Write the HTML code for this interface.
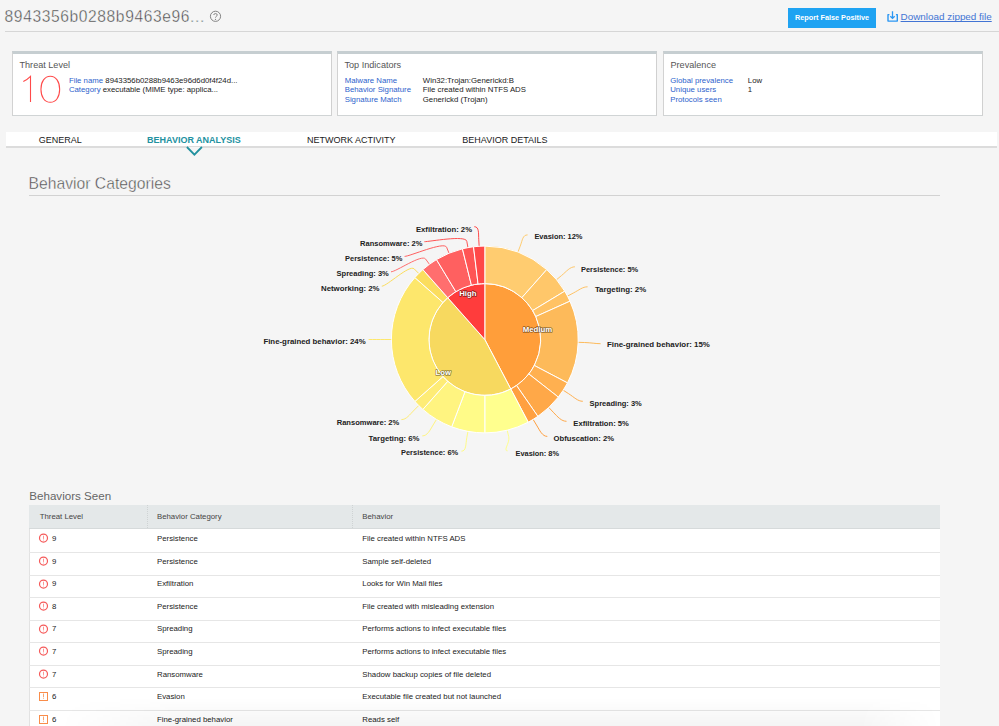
<!DOCTYPE html>
<html><head><meta charset="utf-8">
<style>
*{margin:0;padding:0;box-sizing:border-box}
html,body{width:999px;height:726px;overflow:hidden;background:#f5f5f5;font-family:"Liberation Sans",sans-serif;position:relative}
.abs{position:absolute;white-space:nowrap}
.title{left:4.6px;top:6.6px;font-size:15.6px;letter-spacing:0.6px;color:#444;-webkit-text-stroke:0.4px #f5f5f5;line-height:20px}
.hline{left:4.6px;top:31px;width:995px;height:1px;background:#d6d6d6}
.btn{left:788px;top:8px;width:88px;height:19.6px;background:#1fa3f2;color:#fff;font-weight:bold;font-size:7.3px;line-height:19.6px;text-align:center}
.dl-link{left:900.6px;top:9.6px;font-size:9.9px;color:#4274d4;text-decoration:underline;text-decoration-skip-ink:none;line-height:13px}
.card{position:absolute;top:51px;height:65px;width:320px;background:#fff;border-top:3px solid #c6ced1;border-left:1px solid #d2d2d2;border-right:1px solid #d0d0d0;border-bottom:1.5px solid #d0d4d5}
.ct{position:absolute;left:6.5px;top:5.4px;font-size:9.1px;color:#555;line-height:12px;white-space:nowrap}
.kv{position:absolute;font-size:7.8px;line-height:9.6px;white-space:nowrap;color:#222}
.lk{color:#2d62cc}
.tabs{left:6px;top:132px;width:991px;height:16px;background:#fff;border-bottom:2px solid #dcdcdc}
.tab{position:absolute;top:134.5px;font-size:9px;line-height:11px;color:#1a1a1a;white-space:nowrap}
.tab.act{color:#22919f;font-weight:bold}
.h2{left:28.6px;top:174.3px;font-size:15.7px;color:#4a4a4a;-webkit-text-stroke:0.4px #f5f5f5;line-height:20px}
.h2line{left:28.6px;top:195px;width:911.6px;height:1px;background:#d2d2d2}
.h3{left:29.3px;top:489.3px;font-size:11.6px;color:#666;line-height:14px}
.dl{font-size:7.9px;font-weight:bold;fill:#222}
.il{font-size:8.1px;font-weight:bold;fill:#fff;paint-order:stroke;stroke:#000;stroke-width:1.6px;stroke-opacity:0.45;stroke-linejoin:round}
.tbl{left:29px;top:505px;width:911px;height:230px;background:#fff;border-left:1px solid #e2e2e2}
.th{left:29px;top:505px;width:911px;height:23.5px;background:#e4e8e9;border-bottom:1.5px solid #d6dadb}
.thx{position:absolute;top:512px;font-size:7.8px;color:#444;line-height:9px;white-space:nowrap}
.sep{position:absolute;top:505px;height:23px;width:0;border-left:1px dotted #cfd3d4}
.row{position:absolute;left:29px;width:911px;height:22.56px;border-bottom:1px solid #e6e6e6}
.row span{position:absolute;top:3.8px;font-size:7.8px;line-height:9px;color:#222;white-space:nowrap}
.c1{left:23px} .c2{left:128px} .c3{left:333.3px}
.ic{position:absolute;left:9.9px;top:3.1px;width:10px;height:10px}
.ic svg{display:block}
</style></head><body>
<div class="abs title">8943356b0288b9463e96...</div>
<svg class="abs" style="left:209px;top:10px" width="13" height="13" viewBox="0 0 13 13"><circle cx="6.5" cy="6.3" r="5.1" fill="none" stroke="#777" stroke-width="0.9"/><path d="M4.7,5.0 C4.7,3.1 8.3,3.1 8.3,5.0 C8.3,6.2 6.5,6.3 6.5,7.6" fill="none" stroke="#777" stroke-width="0.9"/><circle cx="6.5" cy="9.3" r="0.6" fill="#777"/></svg>
<div class="abs hline"></div>
<div class="abs btn">Report False Positive</div>
<svg class="abs" style="left:886px;top:11px" width="13" height="12" viewBox="0 0 13 12"><path d="M3.4,3.6 H2 V10.1 H11.3 V3.6 H9.9" fill="none" stroke="#2b97f3" stroke-width="1.4" stroke-linejoin="round"/><path d="M6.5,0.3 V7.3 M4.3,5.2 L6.5,7.4 L8.7,5.2" fill="none" stroke="#2b97f3" stroke-width="1.3"/></svg>
<div class="abs dl-link">Download zipped file</div>

<div class="card" style="left:12px">
  <div class="ct">Threat Level</div>
  <svg style="position:absolute;left:-1px;top:-3px" width="60" height="60"><g transform="translate(-12,-51)" fill="none" stroke="#ff4a4a" stroke-width="1.1"><path d="M23.3,81.6 Q27.5,79.5 30.5,76.4 V102"/><path d="M50.3,76.3 C55.91,76.3 59.65,81.50 59.65,89.3 C59.65,97.10 55.91,102.3 50.3,102.3 C44.69,102.3 40.949999999999996,97.10 40.949999999999996,89.3 C40.949999999999996,81.50 44.69,76.3 50.3,76.3Z"/></g></svg>
  <div class="kv" style="left:55.9px;top:21.8px"><span class="lk">File name</span> 8943356b0288b9463e96d6d0f4f24d...</div>
  <div class="kv" style="left:55.9px;top:31.3px"><span class="lk">Category</span> executable (MIME type: applica...</div>
</div>
<div class="card" style="left:337px">
  <div class="ct">Top Indicators</div>
  <div class="kv lk" style="left:6.7px;top:21.6px">Malware Name</div>
  <div class="kv" style="left:84.8px;top:21.6px">Win32:Trojan:Generickd:B</div>
  <div class="kv lk" style="left:6.7px;top:31.1px">Behavior Signature</div>
  <div class="kv" style="left:84.8px;top:31.1px">File created within NTFS ADS</div>
  <div class="kv lk" style="left:6.7px;top:40.6px">Signature Match</div>
  <div class="kv" style="left:84.8px;top:40.6px">Generickd (Trojan)</div>
</div>
<div class="card" style="left:663px">
  <div class="ct">Prevalence</div>
  <div class="kv lk" style="left:6.2px;top:21.6px">Global prevalence</div>
  <div class="kv" style="left:83.8px;top:21.6px">Low</div>
  <div class="kv lk" style="left:6.2px;top:31.1px">Unique users</div>
  <div class="kv" style="left:83.8px;top:31.1px">1</div>
  <div class="kv lk" style="left:6.2px;top:40.6px">Protocols seen</div>
</div>

<div class="abs tabs"></div>
<div class="tab" style="left:38.8px">GENERAL</div>
<div class="tab act" style="left:147.1px">BEHAVIOR ANALYSIS</div>
<div class="tab" style="left:307px">NETWORK ACTIVITY</div>
<div class="tab" style="left:462.3px">BEHAVIOR DETAILS</div>
<svg class="abs" style="left:184px;top:145px" width="21" height="12" viewBox="0 0 21 12"><path d="M2.9,2.0 L10.4,9.7 L17.9,2.0" fill="#f5f5f5" stroke="#22919f" stroke-width="1.8"/></svg>

<div class="abs h2">Behavior Categories</div>
<div class="abs h2line"></div>
<svg width="999" height="726" viewBox="0 0 999 726" style="position:absolute;left:0;top:0">
<path d="M527.60,234.90C522.60,234.90 522.53,240.01 520.23,246.09L517.92,252.17" fill="none" stroke="#ffcc70" stroke-width="1"/>
<path d="M574.90,266.80C569.90,266.80 566.54,271.38 561.54,275.54L556.55,279.70" fill="none" stroke="#ffc76a" stroke-width="1"/>
<path d="M587.60,286.80C582.60,286.80 579.01,290.05 573.26,293.07L567.50,296.09" fill="none" stroke="#ffc264" stroke-width="1"/>
<path d="M600.60,343.70C595.60,343.70 591.15,342.71 584.65,342.52L578.16,342.32" fill="none" stroke="#fdba5a" stroke-width="1"/>
<path d="M582.80,401.30C577.80,401.30 574.15,397.27 568.69,393.74L563.23,390.21" fill="none" stroke="#ffb050" stroke-width="1"/>
<path d="M566.50,421.30C561.50,421.30 557.73,416.97 553.27,412.24L548.82,407.51" fill="none" stroke="#ffa848" stroke-width="1"/>
<path d="M547.30,436.40C542.30,436.40 539.84,430.56 536.48,424.99L533.12,419.43" fill="none" stroke="#ffa040" stroke-width="1"/>
<path d="M507.60,450.80C502.60,450.80 510.26,442.81 508.71,436.50L507.15,430.19" fill="none" stroke="#ffff8e" stroke-width="1"/>
<path d="M461.40,451.20C466.40,451.20 465.62,444.16 466.79,437.76L467.96,431.37" fill="none" stroke="#fffb88" stroke-width="1"/>
<path d="M422.30,435.90C427.30,435.90 429.76,430.56 433.12,424.99L436.48,419.43" fill="none" stroke="#fff480" stroke-width="1"/>
<path d="M401.40,419.60C406.40,419.60 409.56,414.74 414.16,410.14L418.76,405.54" fill="none" stroke="#feec76" stroke-width="1"/>
<path d="M368.60,339.50C373.60,339.50 378.40,339.50 384.90,339.50L391.40,339.50" fill="none" stroke="#fde76c" stroke-width="1"/>
<path d="M381.80,286.20C386.80,286.20 409.56,264.26 414.16,268.86L418.76,273.46" fill="none" stroke="#fbdd5e" stroke-width="1"/>
<path d="M391.00,271.80C396.00,271.80 421.74,253.80 425.59,259.04L429.45,264.27" fill="none" stroke="#ff6e6e" stroke-width="1"/>
<path d="M404.60,256.40C409.60,256.40 444.08,241.20 446.57,247.20L449.06,253.21" fill="none" stroke="#ff6060" stroke-width="1"/>
<path d="M424.40,241.70C429.40,241.70 465.62,234.84 466.79,241.24L467.96,247.63" fill="none" stroke="#ff5454" stroke-width="1"/>
<path d="M474.30,226.70C479.30,226.70 478.38,233.29 478.77,239.78L479.16,246.27" fill="none" stroke="#ff4848" stroke-width="1"/>
<path d="M484.80,339.50L484.80,283.60A55.9,55.9 0 0 1 510.78,389.00Z" fill="#ff9e3a" stroke="#fff" stroke-width="1" stroke-linejoin="round"/>
<path d="M484.80,246.10A93.4,93.4 0 0 1 546.74,269.59L521.87,297.66A55.9,55.9 0 0 0 484.80,283.60Z" fill="#ffcc70" stroke="#fff" stroke-width="1" stroke-linejoin="round"/>
<path d="M546.74,269.59A93.4,93.4 0 0 1 564.73,291.18L532.64,310.58A55.9,55.9 0 0 0 521.87,297.66Z" fill="#ffc76a" stroke="#fff" stroke-width="1" stroke-linejoin="round"/>
<path d="M564.73,291.18A93.4,93.4 0 0 1 569.97,301.17L535.78,316.56A55.9,55.9 0 0 0 532.64,310.58Z" fill="#ffc264" stroke="#fff" stroke-width="1" stroke-linejoin="round"/>
<path d="M569.97,301.17A93.4,93.4 0 0 1 567.50,382.91L534.30,365.48A55.9,55.9 0 0 0 535.78,316.56Z" fill="#fdba5a" stroke="#fff" stroke-width="1" stroke-linejoin="round"/>
<path d="M567.50,382.91A93.4,93.4 0 0 1 558.32,397.10L528.80,373.97A55.9,55.9 0 0 0 534.30,365.48Z" fill="#ffb050" stroke="#fff" stroke-width="1" stroke-linejoin="round"/>
<path d="M558.32,397.10A93.4,93.4 0 0 1 537.86,416.37L516.55,385.50A55.9,55.9 0 0 0 528.80,373.97Z" fill="#ffa848" stroke="#fff" stroke-width="1" stroke-linejoin="round"/>
<path d="M537.86,416.37A93.4,93.4 0 0 1 528.21,422.20L510.78,389.00A55.9,55.9 0 0 0 516.55,385.50Z" fill="#ffa040" stroke="#fff" stroke-width="1" stroke-linejoin="round"/>
<path d="M484.80,339.50L510.78,389.00A55.9,55.9 0 0 1 447.73,297.66Z" fill="#f7d95f" stroke="#fff" stroke-width="1" stroke-linejoin="round"/>
<path d="M528.21,422.20A93.4,93.4 0 0 1 484.80,432.90L484.80,395.40A55.9,55.9 0 0 0 510.78,389.00Z" fill="#ffff8e" stroke="#fff" stroke-width="1" stroke-linejoin="round"/>
<path d="M484.80,432.90A93.4,93.4 0 0 1 451.68,426.83L464.98,391.77A55.9,55.9 0 0 0 484.80,395.40Z" fill="#fffb88" stroke="#fff" stroke-width="1" stroke-linejoin="round"/>
<path d="M451.68,426.83A93.4,93.4 0 0 1 422.86,409.41L447.73,381.34A55.9,55.9 0 0 0 464.98,391.77Z" fill="#fff480" stroke="#fff" stroke-width="1" stroke-linejoin="round"/>
<path d="M422.86,409.41A93.4,93.4 0 0 1 414.89,401.44L442.96,376.57A55.9,55.9 0 0 0 447.73,381.34Z" fill="#feec76" stroke="#fff" stroke-width="1" stroke-linejoin="round"/>
<path d="M414.89,401.44A93.4,93.4 0 0 1 414.89,277.56L442.96,302.43A55.9,55.9 0 0 0 442.96,376.57Z" fill="#fde76c" stroke="#fff" stroke-width="1" stroke-linejoin="round"/>
<path d="M414.89,277.56A93.4,93.4 0 0 1 422.86,269.59L447.73,297.66A55.9,55.9 0 0 0 442.96,302.43Z" fill="#fbdd5e" stroke="#fff" stroke-width="1" stroke-linejoin="round"/>
<path d="M484.80,339.50L447.73,297.66A55.9,55.9 0 0 1 484.80,283.60Z" fill="#ff3c3c" stroke="#fff" stroke-width="1" stroke-linejoin="round"/>
<path d="M422.86,269.59A93.4,93.4 0 0 1 436.48,259.57L455.88,291.66A55.9,55.9 0 0 0 447.73,297.66Z" fill="#ff6e6e" stroke="#fff" stroke-width="1" stroke-linejoin="round"/>
<path d="M436.48,259.57A93.4,93.4 0 0 1 462.45,248.81L471.42,285.22A55.9,55.9 0 0 0 455.88,291.66Z" fill="#ff6060" stroke="#fff" stroke-width="1" stroke-linejoin="round"/>
<path d="M462.45,248.81A93.4,93.4 0 0 1 473.54,246.78L478.06,284.01A55.9,55.9 0 0 0 471.42,285.22Z" fill="#ff5454" stroke="#fff" stroke-width="1" stroke-linejoin="round"/>
<path d="M473.54,246.78A93.4,93.4 0 0 1 484.80,246.10L484.80,283.60A55.9,55.9 0 0 0 478.06,284.01Z" fill="#ff4848" stroke="#fff" stroke-width="1" stroke-linejoin="round"/>
<text x="459.2" y="296" textLength="17.3" lengthAdjust="spacingAndGlyphs" class="il">High</text>
<text x="522.8" y="332" textLength="29.4" lengthAdjust="spacingAndGlyphs" class="il">Medium</text>
<text x="435.5" y="375" textLength="15.4" lengthAdjust="spacingAndGlyphs" class="il">Low</text>
<text x="534.40" y="238.60" textLength="48.10" lengthAdjust="spacingAndGlyphs" class="dl">Evasion: 12%</text>
<text x="581.00" y="272.00" textLength="57.20" lengthAdjust="spacingAndGlyphs" class="dl">Persistence: 5%</text>
<text x="594.90" y="292.00" textLength="51.30" lengthAdjust="spacingAndGlyphs" class="dl">Targeting: 2%</text>
<text x="606.90" y="347.20" textLength="102.90" lengthAdjust="spacingAndGlyphs" class="dl">Fine-grained behavior: 15%</text>
<text x="589.60" y="406.00" textLength="52.20" lengthAdjust="spacingAndGlyphs" class="dl">Spreading: 3%</text>
<text x="573.30" y="426.00" textLength="55.60" lengthAdjust="spacingAndGlyphs" class="dl">Exfiltration: 5%</text>
<text x="553.60" y="440.90" textLength="60.40" lengthAdjust="spacingAndGlyphs" class="dl">Obfuscation: 2%</text>
<text x="515.60" y="455.50" textLength="43.40" lengthAdjust="spacingAndGlyphs" class="dl">Evasion: 8%</text>
<text x="401.00" y="455.30" textLength="57.20" lengthAdjust="spacingAndGlyphs" class="dl">Persistence: 6%</text>
<text x="368.60" y="440.90" textLength="50.90" lengthAdjust="spacingAndGlyphs" class="dl">Targeting: 6%</text>
<text x="336.70" y="424.60" textLength="62.60" lengthAdjust="spacingAndGlyphs" class="dl">Ransomware: 2%</text>
<text x="263.40" y="343.80" textLength="102.30" lengthAdjust="spacingAndGlyphs" class="dl">Fine-grained behavior: 24%</text>
<text x="321.00" y="290.90" textLength="58.50" lengthAdjust="spacingAndGlyphs" class="dl">Networking: 2%</text>
<text x="336.60" y="276.00" textLength="52.20" lengthAdjust="spacingAndGlyphs" class="dl">Spreading: 3%</text>
<text x="345.10" y="261.10" textLength="57.20" lengthAdjust="spacingAndGlyphs" class="dl">Persistence: 5%</text>
<text x="360.10" y="246.10" textLength="62.30" lengthAdjust="spacingAndGlyphs" class="dl">Ransomware: 2%</text>
<text x="415.90" y="231.70" textLength="56.10" lengthAdjust="spacingAndGlyphs" class="dl">Exfiltration: 2%</text>
</svg>

<div class="abs h3">Behaviors Seen</div>
<div class="abs tbl"></div>
<div class="abs th"></div>
<div class="thx" style="left:39.7px">Threat Level</div>
<div class="thx" style="left:157px">Behavior Category</div>
<div class="thx" style="left:362.3px">Behavior</div>
<div class="sep" style="left:147px"></div>
<div class="sep" style="left:352px"></div>
<div class="row" style="top:530.40px"><span class="c1">9</span><span class="c2">Persistence</span><span class="c3">File created within NTFS ADS</span></div>
<div class="row" style="top:552.96px"><span class="c1">9</span><span class="c2">Persistence</span><span class="c3">Sample self-deleted</span></div>
<div class="row" style="top:575.52px"><span class="c1">9</span><span class="c2">Exfiltration</span><span class="c3">Looks for Win Mail files</span></div>
<div class="row" style="top:598.08px"><span class="c1">8</span><span class="c2">Persistence</span><span class="c3">File created with misleading extension</span></div>
<div class="row" style="top:620.64px"><span class="c1">7</span><span class="c2">Spreading</span><span class="c3">Performs actions to infect executable files</span></div>
<div class="row" style="top:643.20px"><span class="c1">7</span><span class="c2">Spreading</span><span class="c3">Performs actions to infect executable files</span></div>
<div class="row" style="top:665.76px"><span class="c1">7</span><span class="c2">Ransomware</span><span class="c3">Shadow backup copies of file deleted</span></div>
<div class="row" style="top:688.32px"><span class="c1">6</span><span class="c2">Evasion</span><span class="c3">Executable file created but not launched</span></div>
<div class="row" style="top:710.88px"><span class="c1">6</span><span class="c2">Fine-grained behavior</span><span class="c3">Reads self</span></div>
<svg class="abs" style="left:0;top:0;overflow:visible" width="1" height="1"><circle cx="43.5" cy="538.1" r="4.0" fill="none" stroke="#f55a5a" stroke-width="1.2"/><path d="M43.5,535.7V538.9M43.5,539.6V540.4" stroke="#f77" stroke-width="0.8"/></svg>
<svg class="abs" style="left:0;top:0;overflow:visible" width="1" height="1"><circle cx="43.5" cy="561.1" r="4.0" fill="none" stroke="#f55a5a" stroke-width="1.2"/><path d="M43.5,558.7V561.9M43.5,562.6V563.4" stroke="#f77" stroke-width="0.8"/></svg>
<svg class="abs" style="left:0;top:0;overflow:visible" width="1" height="1"><circle cx="43.5" cy="584.1" r="4.0" fill="none" stroke="#f55a5a" stroke-width="1.2"/><path d="M43.5,581.7V584.9M43.5,585.6V586.4" stroke="#f77" stroke-width="0.8"/></svg>
<svg class="abs" style="left:0;top:0;overflow:visible" width="1" height="1"><circle cx="43.5" cy="606.1" r="4.0" fill="none" stroke="#f55a5a" stroke-width="1.2"/><path d="M43.5,603.7V606.9M43.5,607.6V608.4" stroke="#f77" stroke-width="0.8"/></svg>
<svg class="abs" style="left:0;top:0;overflow:visible" width="1" height="1"><circle cx="43.5" cy="629.1" r="4.0" fill="none" stroke="#f55a5a" stroke-width="1.2"/><path d="M43.5,626.7V629.9M43.5,630.6V631.4" stroke="#f77" stroke-width="0.8"/></svg>
<svg class="abs" style="left:0;top:0;overflow:visible" width="1" height="1"><circle cx="43.5" cy="651.1" r="4.0" fill="none" stroke="#f55a5a" stroke-width="1.2"/><path d="M43.5,648.7V651.9M43.5,652.6V653.4" stroke="#f77" stroke-width="0.8"/></svg>
<svg class="abs" style="left:0;top:0;overflow:visible" width="1" height="1"><circle cx="43.5" cy="674.1" r="4.0" fill="none" stroke="#f55a5a" stroke-width="1.2"/><path d="M43.5,671.7V674.9M43.5,675.6V676.4" stroke="#f77" stroke-width="0.8"/></svg>
<svg class="abs" style="left:0;top:0;overflow:visible" width="1" height="1"><rect x="39.5" y="692.5" width="8" height="8" fill="none" stroke="#f98d4a" stroke-width="1"/><path d="M43.5,693.5V697.0M43.5,697.7V698.7" stroke="#f98d4a" stroke-width="0.8"/></svg>
<svg class="abs" style="left:0;top:0;overflow:visible" width="1" height="1"><rect x="39.5" y="715.5" width="8" height="8" fill="none" stroke="#f98d4a" stroke-width="1"/><path d="M43.5,716.5V720.0M43.5,720.7V721.7" stroke="#f98d4a" stroke-width="0.8"/></svg>
<div class="abs" style="left:60px;top:698px;width:890px;height:28px;background:linear-gradient(to bottom,rgba(0,0,0,0),rgba(0,0,0,0.045));-webkit-mask-image:linear-gradient(to right,transparent 0,#000 120px,#000 800px,transparent 880px);mask-image:linear-gradient(to right,transparent 0,#000 120px,#000 800px,transparent 880px)"></div>
</body></html>
